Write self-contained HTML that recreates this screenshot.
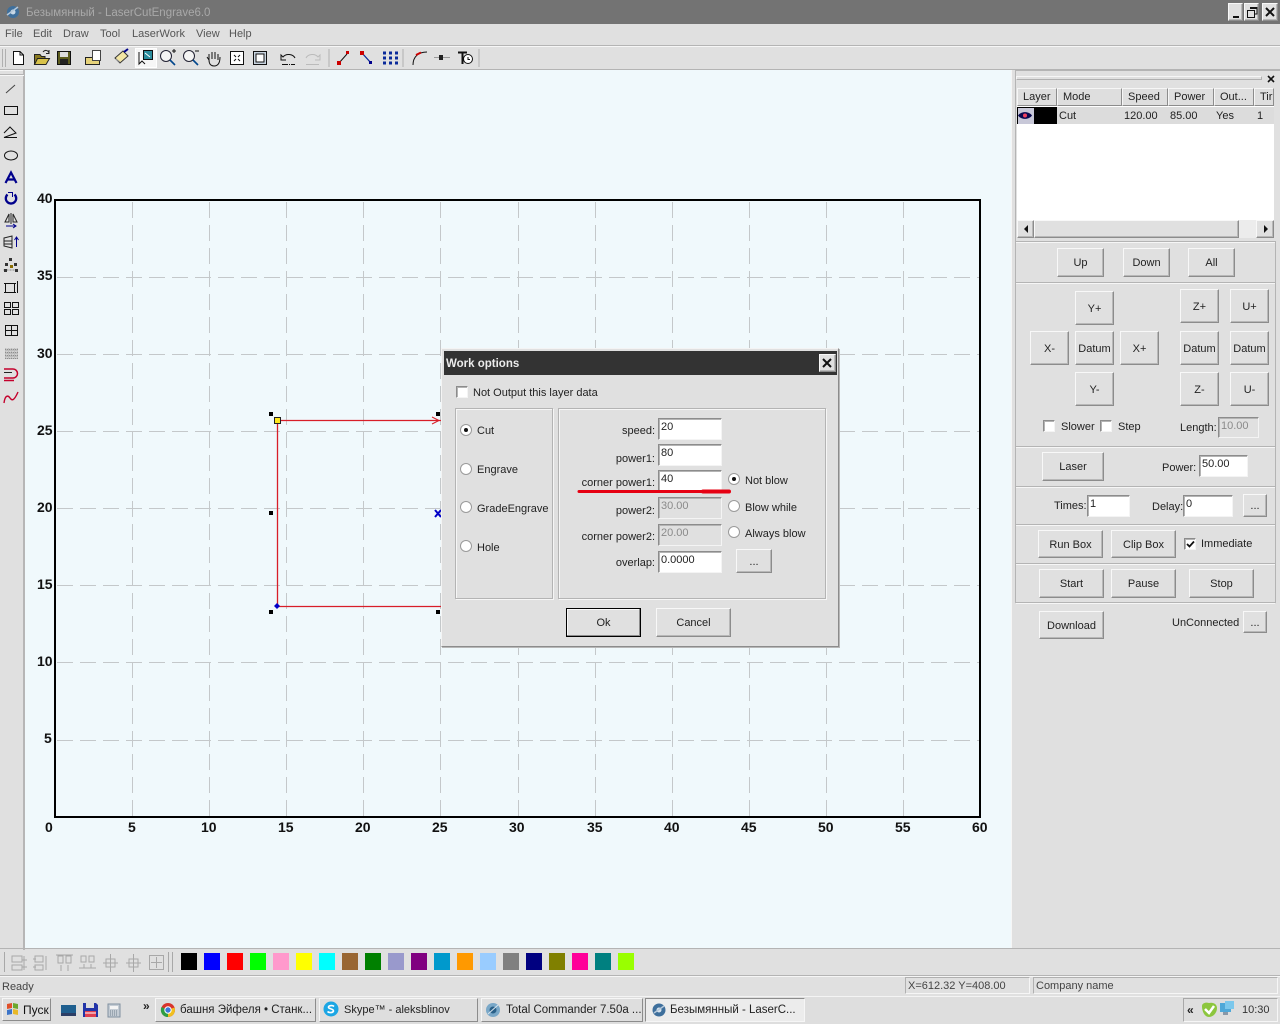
<!DOCTYPE html>
<html><head><meta charset="utf-8"><title>LaserCutEngrave</title>
<style>
html,body{margin:0;padding:0;background:#e0e0e0}
#r{position:relative;width:1280px;height:1024px;overflow:hidden;background:#e0e0e0;font:11px "Liberation Sans","Noto Sans CJK SC",sans-serif;color:#222}
#r div,#r span{position:absolute;box-sizing:border-box}
.t{white-space:nowrap;line-height:14px;margin-top:1px}
.r{text-align:right}
.b{background:#e0e0e0;border:1px solid;border-color:#f8f8f8 #8c8c8c #8c8c8c #f8f8f8;box-shadow:inset -1px -1px 0 #b8b8b8;display:flex;align-items:center;justify-content:center;white-space:nowrap;padding-top:1px}
.i{background:#fff;border:1px solid;border-color:#8c8c8c #f4f4f4 #f4f4f4 #8c8c8c;box-shadow:inset 1px 1px 0 #b4b4b4;padding:0 0 0 2px;line-height:17px;white-space:nowrap}
.d{background:#e0e0e0;color:#8a8a8a}
.c{background:#fff;border:1px solid;border-color:#8c8c8c #f4f4f4 #f4f4f4 #8c8c8c;box-shadow:inset 1px 1px 0 #b4b4b4}
.g{border:1px solid #b4b4b4;box-shadow:1px 1px 0 #f6f6f6,inset 1px 1px 0 #f6f6f6}
.h{background:#b4b4b4;height:1px;border-bottom:0;box-shadow:0 1px 0 #f6f6f6}
.th{top:88px;height:18px;background:#dedede;border:1px solid;border-color:#f6f6f6 #8c8c8c #8c8c8c #f6f6f6;padding:1px 0 0 5px;line-height:14px;overflow:hidden;white-space:nowrap}
.sw{top:953px;width:16px;height:17px}
.tb{top:998px;height:24px;background:#dedede;border:1px solid;border-color:#f6f6f6 #8c8c8c #8c8c8c #f6f6f6;white-space:nowrap;line-height:22px;padding-left:24px;overflow:hidden}
svg{position:absolute;overflow:visible}
</style></head><body><div id="r">

<!-- title -->
<div style="left:0;top:0;width:1280px;height:24px;background:#737373"></div>
<div class="t" style="left:26px;top:5px;color:#a9a9a9;font-size:11.500px">Безымянный - LaserCutEngrave6.0</div>
<svg style="left:5px;top:4px" width="16" height="16"><circle cx="8" cy="8" r="6" fill="#3e6f9c"/><circle cx="8" cy="8" r="2.500" fill="#c8d8e6"/><path d="M2 11L13 3" stroke="#b5c8da" stroke-width="1.500"/></svg>
<div class="b" style="left:1228px;top:3px;width:15px;height:18px"><svg width="9" height="9" style="left:3px;top:5px"><rect x="1" y="7" width="6" height="2" fill="#111"/></svg></div>
<div class="b" style="left:1244px;top:3px;width:15px;height:18px"><svg width="11" height="11" style="left:2px;top:3px"><path d="M3 .5H10V7H8M.5 3.500H7.500V10.500H.5Z M3 1.500H10" fill="none" stroke="#111"/></svg></div>
<div class="b" style="left:1262px;top:3px;width:16px;height:18px"><svg width="10" height="10" style="left:2px;top:3px"><path d="M1 1L9 9M9 1L1 9" stroke="#111" stroke-width="2"/></svg></div>

<!-- menu -->
<div class="t" style="left:5px;top:26px;color:#555">File</div>
<div class="t" style="left:33px;top:26px;color:#555">Edit</div>
<div class="t" style="left:63px;top:26px;color:#555">Draw</div>
<div class="t" style="left:100px;top:26px;color:#555">Tool</div>
<div class="t" style="left:132px;top:26px;color:#555">LaserWork</div>
<div class="t" style="left:196px;top:26px;color:#555">View</div>
<div class="t" style="left:229px;top:26px;color:#555">Help</div>
<div class="h" style="left:0;top:45px;width:1280px"></div>
<div class="h" style="left:0;top:69px;width:1280px"></div>
<div style="left:135px;top:48px;width:22px;height:20px;background:#f6f6f6;border:1px solid #fff"></div>

<!-- toolbar icons -->
<svg style="left:0;top:46px" width="480" height="24" fill="none" stroke="#111">
<path d="M2.500 3V21M5.500 3V21" stroke="#b0b0b0"/>
<path d="M13.500 5.500H20L23.500 9V18.500H13.500Z" fill="#fff"/><path d="M20 5.500V9H23.500"/>
<path d="M34.500 18.500V8.500H40L41.500 10.500H45V13" fill="#8a7a20" stroke="#222"/><path d="M34.500 18.500L37.500 12.500H49.500L46 18.500Z" fill="#d8c24a" stroke="#222"/><path d="M43 6C45 3.500 48 4 49 7M49 4V7.500H46" stroke="#222"/>
<rect x="57.500" y="5.500" width="13" height="13" fill="#5d5d1e" stroke="#111"/><rect x="60" y="6" width="8" height="5" fill="#ddd" stroke="none"/><rect x="60" y="13" width="8" height="5" fill="#222" stroke="none"/>
<path d="M85.500 18.500V11.500H92L94 9.500H99.500V18.500Z" fill="#e6d27a" stroke="#222"/><rect x="92.500" y="4.500" width="8" height="10" fill="#fff" stroke="#444"/>
<path d="M115 12L123 5L128 10L120 17L115 12Z" fill="#f3e6a4" stroke="#333"/><path d="M124 6L128 3" stroke="#00008c" stroke-width="2"/><path d="M116 13L120 16" stroke="#999"/>
<rect x="143.500" y="4.500" width="9" height="9" fill="#2c8d9d" stroke="#111"/><path d="M139 6V18L142 15L145 18" fill="#fff" stroke="#111"/><path d="M145 7L150 11" stroke="#fff"/>
<circle cx="166" cy="10" r="5.500" fill="#f4f4f4" stroke="#223"/><path d="M170 14L175 19" stroke="#00468c" stroke-width="1.600"/><path d="M172 5H176M174 3V7" stroke="#111"/>
<circle cx="189" cy="10" r="5.500" fill="#f4f4f4" stroke="#223"/><path d="M193 14L198 19" stroke="#00468c" stroke-width="1.600"/><path d="M195 5H199" stroke="#111"/>
<path d="M209 14L207 11M209 14V8M212 13V6M215 13V6M218 14V8M209 14C209 19 212 20 214 20C218 20 220 17 220 11" stroke="#111"/>
<rect x="230.500" y="5.500" width="13" height="13" fill="#fff" stroke="#111"/><path d="M234 9L236 11M240 9L238 11M234 15L236 13M240 15L238 13" stroke="#111"/>
<rect x="253.500" y="5.500" width="13" height="13" fill="#c9d4df" stroke="#111"/><rect x="256" y="8" width="8" height="8" fill="#fff" stroke="#111"/>
<path d="M295 12C293 8 286 7 283 11L281 9V14H286" stroke="#111"/><path d="M282 18.500H295" stroke="#111" stroke-dasharray="6 1 1 1"/>
<path d="M306 12C308 8 315 7 318 11L320 9V14H315" stroke="#bbb"/><path d="M306 18.500H319" stroke="#bbb"/>
<path d="M329 3V21" stroke="#b0b0b0"/>
<path d="M339 17L347 8" stroke="#111"/><rect x="337" y="15" width="4" height="4" fill="#c00" stroke="none"/><rect x="346" y="5" width="3" height="3" fill="#c00" stroke="none"/>
<path d="M362 7L371 17" stroke="#0a2a9a" stroke-width="1.300"/><rect x="360" y="5" width="4" height="4" fill="#c00" stroke="none"/><rect x="369" y="15" width="3" height="3" fill="#00008c" stroke="none"/>
<path d="M383 7H398M383 12H398M383 17H398" stroke="#0a2a9a" stroke-width="3" stroke-dasharray="3 3"/>
<path d="M403 3V21" stroke="#b0b0b0"/>
<path d="M413 19C413 11 418 6 427 6" stroke="#111"/><path d="M416 9L421 6.500" stroke="#c00" stroke-width="2"/>
<path d="M434 11.500H450" stroke="#999"/><rect x="439" y="9" width="4" height="5" fill="#222" stroke="none"/>
<path d="M458 6.500H467M462.500 6.500V18" stroke="#111" stroke-width="2"/><circle cx="468" cy="13" r="4.500" fill="#fff" stroke="#111"/><path d="M468 11V13.500H470" stroke="#111"/>
<path d="M479 3V21" stroke="#b0b0b0"/>
</svg>

<!-- left toolbar -->
<div style="left:23px;top:70px;width:2px;height:880px;background:#b6b6b6"></div>
<div class="h" style="left:0;top:74px;width:24px"></div>
<svg style="left:0;top:0" width="24" height="410" fill="none" stroke="#111">
<path d="M6 93L15 85" stroke="#444"/>
<rect x="4.500" y="106.500" width="13" height="8"/>
<path d="M4 133L10 127L16 133L4 137.500H17"/>
<ellipse cx="11" cy="155.500" rx="6.500" ry="4.500"/>
<path d="M5.500 183L11 172.500L16.500 183M7.500 179.500H14.500" stroke="#00008c" stroke-width="2.200"/>
<path d="M7.500 194.500A5.200 5.200 0 1 0 14.500 194.500" stroke="#00008c" stroke-width="2.300"/><path d="M8 192.500H12.500V197" stroke="#00008c"/>
<path d="M5 222L9 214V222ZM17 222L13 214V222ZM11 213V224" stroke="#222"/><path d="M6 226H16M13 224L16 226L13 228" stroke="#00008c"/>
<path d="M4 238L12 236V248L4 246ZM4 241H12M4 244H12" stroke="#222"/><path d="M16.500 247V237M14.500 240L16.500 237L18.500 240" stroke="#00008c"/>
<path d="M3.500 270H18" stroke="#888" stroke-dasharray="2 1"/><rect x="9" y="258" width="3" height="3" fill="#333" stroke="none"/><rect x="5" y="263" width="3" height="3" fill="#333" stroke="none"/><rect x="14" y="263" width="3" height="3" fill="#333" stroke="none"/><rect x="10" y="265" width="3" height="3" fill="#8a6d00" stroke="none"/><rect x="4" y="269" width="3" height="3" fill="#333" stroke="none"/><rect x="15" y="269" width="3" height="3" fill="#333" stroke="none"/>
<rect x="5.500" y="283.500" width="9" height="9"/><path d="M4 283.500H16M4 292.500H16M17.500 281V293"/>
<rect x="4.500" y="302.500" width="6" height="5"/><rect x="12.500" y="302.500" width="6" height="5"/><rect x="4.500" y="309.500" width="6" height="5"/><rect x="12.500" y="309.500" width="6" height="5"/>
<rect x="5.500" y="325.500" width="12" height="10"/><path d="M11.500 326V335M6 330.500H17"/>
<path d="M5 348H18V359H5Z" fill="#bdbdbd" stroke="none"/><path d="M5 349.500H18M5 352.500H18M5 355.500H18M5 358.500H18" stroke="#8e8e8e" stroke-dasharray="1 1"/><path d="M7 348V360M10 348V360M13 348V360M16 348V360" stroke="#e6e6e6" stroke-dasharray="1 2"/>
<path d="M4 369H13A4.500 4.500 0 0 1 13 378H4M4 380.500H14" stroke="#c4002c" stroke-width="1.500"/><path d="M4 372.500H12" stroke="#222"/>
<path d="M4 403C5 395 8 395 10 398C12 401 14 401 18 392" stroke="#c4002c" stroke-width="1.400"/>
</svg>

<!-- canvas -->
<div style="left:25px;top:70px;width:986px;height:878px;background:#f0f9fc"></div>
<svg style="left:0;top:0" width="1280" height="1024" fill="none">
<g stroke="#c4c8ca" stroke-dasharray="16 7">
<path d="M132.500 202V816M209.500 202V816M286.500 202V816M363.500 202V816M440.500 202V816M518.500 202V816M595.500 202V816M672.500 202V816M749.500 202V816M826.500 202V816M903.500 202V816"/>
<path d="M57 277.500H979M57 354.500H979M57 431.500H979M57 508.500H979M57 585.500H979M57 662.500H979M57 740.500H979"/>
</g>
<rect x="55" y="200" width="925" height="617" stroke="#000" stroke-width="2"/>
<path d="M277.500 420.500H441M277.500 420.500V606.500H441" stroke="#d81e28" stroke-width="1.300"/>
<path d="M432 417L439 420.500L432 424" stroke="#d81e28"/>
<rect x="269" y="412" width="4" height="4" fill="#000"/><rect x="436" y="412" width="4" height="4" fill="#000"/>
<rect x="269" y="511" width="4" height="4" fill="#000"/><rect x="269" y="610" width="4" height="4" fill="#000"/><rect x="436" y="610" width="4" height="4" fill="#000"/>
<rect x="274.500" y="417.500" width="6" height="6" fill="#ffe81e" stroke="#222"/>
<path d="M277 603L280 606L277 609L274 606Z" fill="#0000c8"/>
<path d="M435 510L441 517M441 510L435 517" stroke="#0000c8" stroke-width="2"/>
</svg>
<div style="font-weight:bold;font-size:14px;left:0;top:-1px;width:1px;height:1px;color:#111">
<span class="t" style="left:37px;top:191px">40</span><span class="t" style="left:37px;top:268px">35</span><span class="t" style="left:37px;top:346px">30</span><span class="t" style="left:37px;top:423px">25</span><span class="t" style="left:37px;top:500px">20</span><span class="t" style="left:37px;top:577px">15</span><span class="t" style="left:37px;top:654px">10</span><span class="t" style="left:44px;top:731px">5</span>
<span class="t" style="left:45px;top:820px">0</span><span class="t" style="left:128px;top:820px">5</span><span class="t" style="left:201px;top:820px">10</span><span class="t" style="left:278px;top:820px">15</span><span class="t" style="left:355px;top:820px">20</span><span class="t" style="left:432px;top:820px">25</span><span class="t" style="left:509px;top:820px">30</span><span class="t" style="left:587px;top:820px">35</span><span class="t" style="left:664px;top:820px">40</span><span class="t" style="left:741px;top:820px">45</span><span class="t" style="left:818px;top:820px">50</span><span class="t" style="left:895px;top:820px">55</span><span class="t" style="left:972px;top:820px">60</span>
</div>

<!-- right panel -->
<div style="left:1011px;top:70px;width:269px;height:878px;background:#e0e0e0;border-left:1px solid #f6f6f6"></div>
<div style="left:1015px;top:70px;width:265px;height:1px;background:#b4b4b4"></div>
<div style="left:1016px;top:76px;width:246px;height:4px;border:1px solid;border-color:#f6f6f6 #b0b0b0 #b0b0b0 #f6f6f6"></div>
<svg style="left:1267px;top:75px" width="8" height="8"><path d="M1 1L7 7M7 1L1 7" stroke="#111" stroke-width="1.600"/></svg>
<div style="left:1017px;top:88px;width:257px;height:150px;background:#fff;overflow:hidden"></div>
<div class="th" style="left:1017px;width:40px">Layer</div>
<div class="th" style="left:1057px;width:65px">Mode</div>
<div class="th" style="left:1122px;width:46px">Speed</div>
<div class="th" style="left:1168px;width:46px">Power</div>
<div class="th" style="left:1214px;width:40px">Out...</div>
<div class="th" style="left:1254px;width:20px">Tir</div>
<div style="left:1017px;top:107px;width:257px;height:17px;background:#dcdcdc"></div>
<div style="left:1034px;top:107px;width:23px;height:17px;background:#000"></div>
<div style="left:1017px;top:107px;width:17px;height:17px;background:#c8c8d8;border-left:1px solid #000;border-top:1px solid #000"></div>
<svg style="left:1017px;top:109px" width="17" height="13"><path d="M1 6.500C4 2 12 2 15 6.500C12 11 4 11 1 6.500Z" fill="#0a0a50"/><circle cx="8" cy="6.500" r="2" fill="#f04060"/></svg>
<div class="t" style="left:1059px;top:108px">Cut</div>
<div class="t" style="left:1124px;top:108px">120.00</div>
<div class="t" style="left:1170px;top:108px">85.00</div>
<div class="t" style="left:1216px;top:108px">Yes</div>
<div class="t" style="left:1257px;top:108px">1</div>
<div style="left:1017px;top:220px;width:257px;height:18px;background:#ececec"></div>
<div class="b" style="left:1017px;top:220px;width:17px;height:18px"></div>
<div class="b" style="left:1034px;top:220px;width:205px;height:18px"></div>
<div class="b" style="left:1256px;top:220px;width:18px;height:18px"></div>
<svg style="left:1021px;top:224px" width="250" height="10"><path d="M7 1V9L3 5ZM243 1V9L247 5Z" fill="#111"/></svg>

<div class="h" style="left:1016px;top:241px;width:259px"></div>
<div class="h" style="left:1016px;top:282px;width:259px"></div>
<div class="h" style="left:1016px;top:446px;width:259px"></div>
<div class="h" style="left:1016px;top:486px;width:259px"></div>
<div class="h" style="left:1016px;top:524px;width:259px"></div>
<div class="h" style="left:1016px;top:563px;width:259px"></div>
<div class="h" style="left:1016px;top:602px;width:259px"></div>
<div style="left:1015px;top:70px;width:1px;height:533px;background:#b4b4b4"></div>
<div style="left:1275px;top:241px;width:1px;height:362px;background:#b4b4b4"></div>

<div class="b" style="left:1057px;top:248px;width:47px;height:29px">Up</div>
<div class="b" style="left:1123px;top:248px;width:47px;height:29px">Down</div>
<div class="b" style="left:1188px;top:248px;width:47px;height:29px">All</div>
<div class="b" style="left:1075px;top:291px;width:39px;height:34px">Y+</div>
<div class="b" style="left:1030px;top:331px;width:39px;height:34px">X-</div>
<div class="b" style="left:1075px;top:331px;width:39px;height:34px">Datum</div>
<div class="b" style="left:1120px;top:331px;width:39px;height:34px">X+</div>
<div class="b" style="left:1075px;top:372px;width:39px;height:34px">Y-</div>
<div class="b" style="left:1180px;top:289px;width:39px;height:34px">Z+</div>
<div class="b" style="left:1230px;top:289px;width:39px;height:34px">U+</div>
<div class="b" style="left:1180px;top:331px;width:39px;height:34px">Datum</div>
<div class="b" style="left:1230px;top:331px;width:39px;height:34px">Datum</div>
<div class="b" style="left:1180px;top:372px;width:39px;height:34px">Z-</div>
<div class="b" style="left:1230px;top:372px;width:39px;height:34px">U-</div>
<div class="c" style="left:1043px;top:420px;width:12px;height:12px"></div>
<div class="t" style="left:1061px;top:419px">Slower</div>
<div class="c" style="left:1100px;top:420px;width:12px;height:12px"></div>
<div class="t" style="left:1118px;top:419px">Step</div>
<div class="t" style="left:1180px;top:420px">Length:</div>
<div class="i d" style="left:1218px;top:417px;width:41px;height:21px">10.00</div>
<div class="b" style="left:1042px;top:452px;width:62px;height:29px;padding-top:0">Laser</div>
<div class="t" style="left:1162px;top:460px">Power:</div>
<div class="i" style="left:1199px;top:455px;width:49px;height:22px">50.00</div>
<div class="t" style="left:1054px;top:498px">Times:</div>
<div class="i" style="left:1087px;top:495px;width:43px;height:22px">1</div>
<div class="t" style="left:1152px;top:499px">Delay:</div>
<div class="i" style="left:1183px;top:495px;width:50px;height:22px">0</div>
<div class="b" style="left:1243px;top:494px;width:24px;height:23px">...</div>
<div class="b" style="left:1038px;top:530px;width:65px;height:28px">Run Box</div>
<div class="b" style="left:1111px;top:530px;width:65px;height:28px">Clip Box</div>
<div class="c" style="left:1184px;top:538px;width:12px;height:12px"></div>
<svg style="left:1186px;top:540px" width="9" height="9"><path d="M1 4L3.500 6.500L8 1.500" fill="none" stroke="#111" stroke-width="1.800"/></svg>
<div class="t" style="left:1201px;top:536px">Immediate</div>
<div class="b" style="left:1039px;top:569px;width:65px;height:29px">Start</div>
<div class="b" style="left:1111px;top:569px;width:65px;height:29px">Pause</div>
<div class="b" style="left:1189px;top:569px;width:65px;height:29px">Stop</div>
<div class="b" style="left:1039px;top:611px;width:65px;height:28px">Download</div>
<div class="t" style="left:1172px;top:615px">UnConnected</div>
<div class="b" style="left:1243px;top:611px;width:24px;height:22px">...</div>

<!-- dialog -->
<div style="left:441px;top:348px;width:398px;height:299px;background:#e0e0e0;border:1px solid;border-color:#f4f4f4 #8c8c8c #8c8c8c #f4f4f4;box-shadow:1px 1px 0 #b8b8b8"></div>
<div style="left:444px;top:351px;width:393px;height:24px;background:#333"></div>
<div class="t" style="left:446px;top:356px;color:#ececec;font-weight:bold;font-size:11.500px">Work options</div>
<div class="b" style="left:819px;top:354px;width:17px;height:18px"><svg width="10" height="10" style="left:2px;top:3px"><path d="M1 1L9 9M9 1L1 9" stroke="#111" stroke-width="2"/></svg></div>
<div class="c" style="left:456px;top:386px;width:12px;height:12px"></div>
<div class="t" style="left:473px;top:385px">Not Output this layer data</div>
<div class="g" style="left:455px;top:408px;width:98px;height:191px"></div>
<div class="g" style="left:558px;top:408px;width:268px;height:191px"></div>

<svg style="left:0;top:0" width="1280" height="1024">
<g fill="#fff" stroke="#9a9a9a">
<circle cx="466" cy="430" r="5.500"/><circle cx="466" cy="469" r="5.500"/><circle cx="466" cy="507" r="5.500"/><circle cx="466" cy="546" r="5.500"/>
<circle cx="734" cy="479" r="5.500"/><circle cx="734" cy="506" r="5.500"/><circle cx="734" cy="532" r="5.500"/>
</g>
<circle cx="466" cy="430" r="2" fill="#111"/><circle cx="734" cy="479" r="2" fill="#111"/>
</svg>
<div class="t" style="left:477px;top:423px">Cut</div>
<div class="t" style="left:477px;top:462px">Engrave</div>
<div class="t" style="left:477px;top:501px">GradeEngrave</div>
<div class="t" style="left:477px;top:540px">Hole</div>
<div class="t r" style="left:555px;top:423px;width:100px">speed:</div>
<div class="t r" style="left:555px;top:451px;width:100px">power1:</div>
<div class="t r" style="left:555px;top:475px;width:100px">corner power1:</div>
<div class="t r" style="left:555px;top:503px;width:100px">power2:</div>
<div class="t r" style="left:555px;top:529px;width:100px">corner power2:</div>
<div class="t r" style="left:555px;top:555px;width:100px">overlap:</div>
<div class="i" style="left:658px;top:418px;width:64px;height:22px">20</div>
<div class="i" style="left:658px;top:444px;width:64px;height:22px">80</div>
<div class="i" style="left:658px;top:470px;width:64px;height:22px">40</div>
<div class="i d" style="left:658px;top:497px;width:64px;height:22px">30.00</div>
<div class="i d" style="left:658px;top:524px;width:64px;height:22px">20.00</div>
<div class="i" style="left:658px;top:551px;width:64px;height:22px">0.0000</div>
<div class="t" style="left:745px;top:473px">Not blow</div>
<div class="t" style="left:745px;top:500px">Blow while</div>
<div class="t" style="left:745px;top:526px">Always blow</div>
<div class="b" style="left:736px;top:549px;width:36px;height:24px">...</div>
<div class="b" style="left:566px;top:608px;width:75px;height:29px;border:1px solid #000;box-shadow:inset -1px -1px 0 #8c8c8c,inset 1px 1px 0 #f8f8f8;padding-top:0">Ok</div>
<div class="b" style="left:656px;top:608px;width:75px;height:29px;padding-top:0">Cancel</div>
<svg style="left:0;top:0" width="1280" height="1024"><path d="M579 491.500H703" stroke="#e60012" stroke-width="3" stroke-linecap="round"/><path d="M703 491.500H729" stroke="#e60012" stroke-width="4" stroke-linecap="round"/></svg>

<!-- bottom toolbar -->
<div style="left:0;top:948px;width:1280px;height:1px;background:#b4b4b4"></div>
<div class="h" style="left:0;top:975px;width:1280px"></div>
<svg style="left:0;top:950px" width="176" height="24" fill="none" stroke="#a8a8a8">
<path d="M4.500 2V22M168.500 2V22M172.500 2V22"/>
<path d="M12 6H22V12H12ZM12 15H22V20H12ZM24 6V20M22 10H27M22 17H27"/>
<path d="M35 6H43V12H35ZM35 15H43V20H35ZM46 6V20M36 9H33M36 17H33"/>
<path d="M58 6V13H63V6ZM66 6V13H71V6ZM56 5H73M61 15V21M68 15V21"/>
<path d="M81 12V6H86V12ZM89 12V6H94V12ZM79 18H96M84 14V18M91 14V18"/>
<path d="M106 9H115V17H106ZM110.500 4V22M103 13H118"/>
<path d="M129 9H138V17H129ZM133.500 4V22M126 13H141"/>
<rect x="149.500" y="5.500" width="14" height="14"/><path d="M156.500 7V18M151 12.500H162"/>
</svg>
<div class="sw" style="left:181px;background:#000"></div>
<div class="sw" style="left:204px;background:#0000ff"></div>
<div class="sw" style="left:227px;background:#ff0000"></div>
<div class="sw" style="left:250px;background:#00ff00"></div>
<div class="sw" style="left:273px;background:#ff99cc"></div>
<div class="sw" style="left:296px;background:#ffff00"></div>
<div class="sw" style="left:319px;background:#00ffff"></div>
<div class="sw" style="left:342px;background:#996633"></div>
<div class="sw" style="left:365px;background:#008000"></div>
<div class="sw" style="left:388px;background:#9999cc"></div>
<div class="sw" style="left:411px;background:#800080"></div>
<div class="sw" style="left:434px;background:#0099cc"></div>
<div class="sw" style="left:457px;background:#ff9900"></div>
<div class="sw" style="left:480px;background:#99ccff"></div>
<div class="sw" style="left:503px;background:#808080"></div>
<div class="sw" style="left:526px;background:#000080"></div>
<div class="sw" style="left:549px;background:#808000"></div>
<div class="sw" style="left:572px;background:#ff0099"></div>
<div class="sw" style="left:595px;background:#008080"></div>
<div class="sw" style="left:618px;background:#99ff00"></div>

<!-- status -->
<div class="t" style="left:2px;top:979px;color:#444">Ready</div>
<div class="t" style="left:905px;top:976px;width:125px;height:17px;border:1px solid;border-color:#b0b0b0 #f6f6f6 #f6f6f6 #b0b0b0;padding:1px 2px;color:#444">X=612.32 Y=408.00</div>
<div class="t" style="left:1033px;top:976px;width:245px;height:17px;border:1px solid;border-color:#b0b0b0 #f6f6f6 #f6f6f6 #b0b0b0;padding:1px 2px;color:#444">Company name</div>

<!-- taskbar -->
<div style="left:0;top:996px;width:1280px;height:28px;background:#dedede;border-top:1px solid #f4f4f4"></div>
<div class="tb" style="left:2px;width:49px;top:998px;height:23px;padding-left:20px;color:#111;font-size:12px">Пуск</div>
<svg style="left:5px;top:1001px" width="16" height="16"><path d="M2 3L7 2V7L2 8Z" fill="#e0502a"/><path d="M8 2L13 3V8L8 7Z" fill="#6ca82e"/><path d="M2 9L7 8V13L2 14Z" fill="#3c74c8"/><path d="M8 8L13 9V14L8 13Z" fill="#e8b828"/></svg>
<svg style="left:60px;top:1002px" width="70" height="16">
<rect x="1" y="3" width="15" height="11" fill="#1f5f8f"/><rect x="1" y="11" width="15" height="3" fill="#2c3e66"/>
<path d="M23 1H36L38 3V15H23Z" fill="#2234a8"/><rect x="26" y="1" width="8" height="5" fill="#ddd"/><rect x="25" y="9" width="11" height="6" fill="#e04050"/><path d="M25 11H36" stroke="#fff"/>
<rect x="48" y="2" width="12" height="13" fill="#c4ccd4" stroke="#8090a0"/><rect x="50" y="4" width="8" height="3" fill="#f4f4f4"/><path d="M50 9H58M50 11H58M50 13H58" stroke="#70808e" stroke-dasharray="1 1"/>
</svg>
<div class="t" style="left:143px;top:998px;font-weight:bold;font-size:12px">»</div>
<div class="tb" style="left:155px;width:161px;font-size:11.500px">башня Эйфеля • Станк...</div>
<svg style="left:160px;top:1002px" width="16" height="16"><circle cx="8" cy="8" r="7" fill="#d8342c"/><path d="M8 8L14.500 5.500A7 7 0 0 1 8 15Z" fill="#f0c020"/><path d="M8 8L8 15A7 7 0 0 1 1.500 5Z" fill="#2f9e44"/><circle cx="8" cy="8" r="3.200" fill="#3a78d8" stroke="#fff"/></svg>
<div class="tb" style="left:319px;width:159px;font-size:11px">Skype™ - aleksblinov</div>
<svg style="left:323px;top:1001px" width="16" height="16"><circle cx="8" cy="8" r="7.500" fill="#1ba6e4"/><path d="M11 5.500C9.500 4 5 4.500 5.500 6.500C6 8 10.500 7.500 10.500 10C10 12 6 12 4.500 10.500" fill="none" stroke="#fff" stroke-width="1.600"/></svg>
<div class="tb" style="left:481px;width:162px;font-size:11.500px">Total Commander 7.50a ...</div>
<svg style="left:485px;top:1002px" width="16" height="16"><circle cx="8" cy="8" r="7" fill="#7aa8c8"/><circle cx="8" cy="8" r="3.500" fill="#2a6088"/><path d="M3 12L13 3" stroke="#d8e4ee"/></svg>
<div class="tb" style="left:645px;width:160px;background:#ececec;border-color:#8c8c8c #f6f6f6 #f6f6f6 #8c8c8c;color:#222;font-size:11.500px">Безымянный - LaserC...</div>
<svg style="left:651px;top:1002px" width="16" height="16"><circle cx="8" cy="8" r="6.500" fill="#3e6f9c"/><circle cx="8" cy="8" r="2.500" fill="#d8e4ee"/><path d="M3 11L13 4" stroke="#b5c8da" stroke-width="1.500"/></svg>
<div style="left:1183px;top:998px;width:95px;height:24px;border:1px solid;border-color:#a8a8a8 #f6f6f6 #f6f6f6 #a8a8a8"></div>
<div class="t" style="left:1187px;top:1002px;font-weight:bold;font-size:12px">«</div>
<svg style="left:1200px;top:1001px" width="38" height="18"><path d="M2 5C2 2 6 1 9 2C13 1 17 3 17 7C17 12 13 16 9 16C5 16 2 11 2 5Z" fill="#8cc63e"/><path d="M5 8L9 12L14 5" fill="none" stroke="#fff" stroke-width="2.500"/><rect x="20" y="2" width="11" height="9" fill="#4fa8d8"/><rect x="25" y="0" width="9" height="8" fill="#7cc8ec"/><rect x="23" y="11" width="5" height="3" fill="#8898a8"/></svg>
<div class="t" style="left:1242px;top:1002px;color:#333">10:30</div>

</div></body></html>
